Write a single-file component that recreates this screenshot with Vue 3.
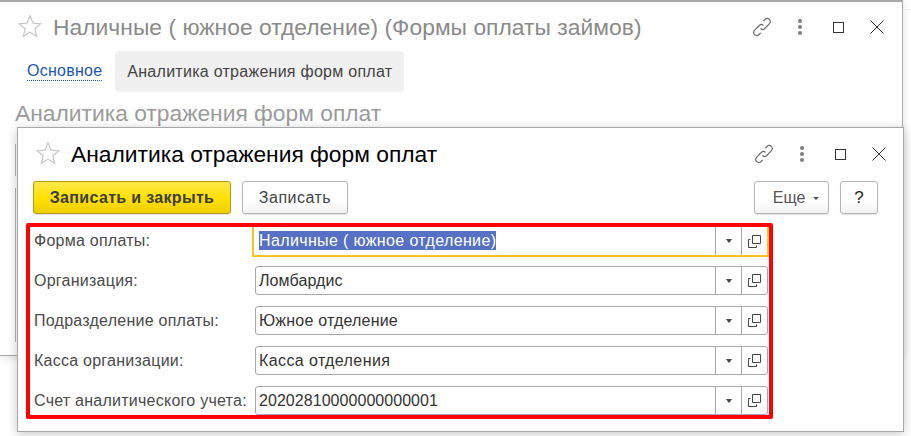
<script setup>
const rows = [
  { label: 'Форма оплаты:', value: 'Наличные ( южное отделение)', focused: true, track: 0.37 },
  { label: 'Организация:', value: 'Ломбардис', track: 0.1 },
  { label: 'Подразделение оплаты:', value: 'Южное отделение', track: 0.2 },
  { label: 'Касса организации:', value: 'Касса отделения', track: 0.4 },
  { label: 'Счет аналитического учета:', value: '20202810000000000001', track: 0.05 }
]
</script>

<template>
  <div class="desk">
    <section class="win back">
      <header class="head back-head">
        <svg class="star" viewBox="0 0 24 24" width="24" height="24"><path d="M12 1.800l3 7.300 7.800.6-6 5.100 1.900 7.600L12 18.300l-6.700 4.100 1.900-7.600-6-5.100 7.800-.6z" /></svg>
        <h1 class="title muted">Наличные ( южное отделение) (Формы оплаты займов)</h1>
        <div class="tools">
          <svg class="link" viewBox="0 0 22 22" width="22" height="22"><path d="M9.500 12.500c1.300 1.300 3 1.200 4.200 0l4.600-4.600c1.400-1.400 1.400-3.300 0-4.500s-3-1.200-4.300.1l-1.700 1.700M12.500 9.500c-1.300-1.300-3-1.200-4.200 0l-4.600 4.600c-1.400 1.400-1.400 3.300 0 4.500s3 1.200 4.300-.1l1.700-1.700" /></svg>
          <span class="dots"><i /><i /><i /></span>
          <span class="max" />
          <svg class="close" viewBox="0 0 14 14" width="14" height="14"><path d="M.5.500l13 13M13.500.500l-13 13" /></svg>
        </div>
      </header>
      <nav class="tabs">
        <a class="tab-link">Основное</a>
        <span class="tab-active">Аналитика отражения форм оплат</span>
      </nav>
      <h2 class="title sub">Аналитика отражения форм оплат</h2>
      <div class="stubs"><span class="stub s1" /><span class="stub s2" /></div>
    </section>

    <span class="edge" />

    <section class="win front">
      <header class="head front-head">
        <svg class="star" viewBox="0 0 24 24" width="24" height="24"><path d="M12 1.800l3 7.300 7.800.6-6 5.100 1.900 7.600L12 18.300l-6.700 4.100 1.900-7.600-6-5.100 7.800-.6z" /></svg>
        <h1 class="title dark">Аналитика отражения форм оплат</h1>
        <div class="tools">
          <svg class="link" viewBox="0 0 22 22" width="22" height="22"><path d="M9.500 12.500c1.300 1.300 3 1.200 4.200 0l4.600-4.600c1.400-1.400 1.400-3.300 0-4.500s-3-1.200-4.300.1l-1.700 1.700M12.500 9.500c-1.300-1.300-3-1.200-4.200 0l-4.600 4.600c-1.400 1.400-1.400 3.300 0 4.500s3 1.200 4.300-.1l1.700-1.700" /></svg>
          <span class="dots"><i /><i /><i /></span>
          <span class="max" />
          <svg class="close" viewBox="0 0 14 14" width="14" height="14"><path d="M.5.500l13 13M13.500.500l-13 13" /></svg>
        </div>
      </header>

      <div class="toolbar">
        <button class="btn primary">Записать и закрыть</button>
        <button class="btn save">Записать</button>
        <span class="spacer" />
        <button class="btn more">Еще<span class="caret" /></button>
        <button class="btn help">?</button>
      </div>

      <div class="form">
        <div v-for="row in rows" :key="row.label" class="row">
          <label class="label">{{ row.label }}</label>
          <div class="input" :class="{ focused: row.focused }">
            <span class="value" :style="{ letterSpacing: row.track + 'px' }"><span :class="{ selected: row.focused }">{{ row.value }}</span></span>
            <span class="cell"><span class="arrow" /></span>
            <span class="cell">
              <svg viewBox="0 0 13 13" width="13" height="13"><path class="copy" d="M4.500.5h8v8h-8zM2.500 4.500h-2v8h8v-2" /></svg>
            </span>
          </div>
        </div>
        <span class="mark" />
      </div>
    </section>
  </div>
</template>

<style>
html, body { margin: 0; background: #fff; }
</style>

<style scoped>
.desk {
  position: relative;
  width: 911px;
  height: 436px;
  overflow: hidden;
  background: #fff;
  font-family: "Liberation Sans", Arial, sans-serif;
}
.win { position: absolute; box-sizing: border-box; background: #fff; }
.back {
  left: 0; top: 0; width: 903px; height: 356px;
  border-top: 2px solid #a8a8a8;
  border-right: 1px solid #a8a8a8;
  border-bottom: 1px solid #a8a8a8;
  box-shadow: 0 2px 8px rgba(0,0,0,.12);
}
.edge { position: absolute; left: 904px; top: 9px; width: 7px; height: 1px; background: #ececec; }
.front {
  left: 17px; top: 127px; width: 887px; height: 305px;
  border: 1px solid #a8a8a8;
  box-shadow: 0 2px 10px rgba(0,0,0,.22);
  display: flex; flex-direction: column;
}
.head { display: flex; align-items: center; }
.back-head { height: 50px; padding-left: 18px; padding-right: 18px; }
.front-head { height: 52px; padding-left: 18px; padding-right: 17px; }
.star { flex: none; margin-bottom: 2px; }
.star path { fill: #fff; stroke: #c4c8cd; stroke-width: 1.200; }
.title { margin: 0; font-weight: 400; font-size: 22.800px; line-height: 28px; white-space: nowrap; }
.head .title { margin-left: 11px; }
.muted { color: #8a8a8a; letter-spacing: .04px; }
.dark { color: #000; }
.tools { margin-left: auto; display: flex; align-items: center; }
.link path { fill: none; stroke: #6b6b6b; stroke-width: 1.200; }
.dots { display: flex; flex-direction: column; gap: 2px; margin-left: 25px; width: 4px; }
.dots i { display: block; width: 4px; height: 4px; border-radius: 50%; background: #7d7d7d; }
.max { box-sizing: border-box; width: 11px; height: 11px; border: 1px solid #333; margin-left: 31px; }
.close { margin-left: 26px; }
.close path { fill: none; stroke: #333; stroke-width: 1; }
.tabs { display: flex; align-items: center; height: 41px; padding-left: 27px; margin-top: -1px; }
.tab-link { color: #1a56b8; font-size: 16px; letter-spacing: .25px; border-bottom: 1px dotted #1a56b8; line-height: 18px; }
.tab-active {
  margin-left: 13px; padding: 0 12px; height: 41px; line-height: 41px;
  background: #f0f0f0; border-radius: 4px; color: #444; font-size: 16px; letter-spacing: .27px;
}
.sub { color: #9b9b9b; margin-left: 15px; margin-top: 7px; }
.stubs { position: absolute; left: 15px; top: 142px; }
.stub { position: absolute; left: 0; width: 2px; box-sizing: border-box; border-left: 1px solid #b5b5b5; }
.s1 { top: 0; height: 32px; }
.s2 { top: 44px; height: 154px; }
.toolbar { display: flex; align-items: stretch; height: 33px; padding: 0 25px 0 15px; margin-top: 1px; gap: 11px; }
.spacer { flex: 1; }
.btn {
  box-sizing: border-box; height: 33px; padding: 0;
  font-family: inherit; font-size: 16px; color: #444;
  border: 1px solid #b5b5b5; border-radius: 3px;
  background: linear-gradient(#fff 60%, #f2f2f2);
  box-shadow: 0 1px 1px rgba(0,0,0,.12);
}
.primary {
  width: 198px; font-weight: 700; color: #3c3c3c; letter-spacing: .33px;
  border-color: #b49b10;
  background: linear-gradient(#ffe94a, #ffe000 55%, #efce00);
}
.save { width: 106px; letter-spacing: .5px; }
.more { width: 75px; padding-left: 9px; color: #555; }
.help { width: 38px; color: #222; font-size: 17px; }
.caret {
  display: inline-block; vertical-align: middle; margin-left: 8px;
  border: 3px solid transparent; border-top: 3px solid #555; border-bottom: 0;
}
.form { position: relative; display: flex; flex-direction: column; gap: 11px; padding: 0 0 0 16px; margin-top: 12px; }
.row { display: flex; align-items: flex-start; height: 29px; }
.label { width: 221px; flex: none; color: #4a4a4a; font-size: 16px; line-height: 29px; letter-spacing: .25px; white-space: nowrap; }
.input {
  box-sizing: border-box; width: 513px; height: 29px; flex: none;
  display: flex; align-items: stretch;
  border: 1px solid #a8a8a8; border-radius: 3px;
  font-size: 16px; color: #333;
}
.input.focused {
  width: 517px; height: 31px; margin-left: -3px;
  border: 2px solid #fbc61c; border-top: 1px solid transparent; border-radius: 0;
}
.value { flex: 1; padding-left: 3px; line-height: 27px; white-space: nowrap; }
.focused .value { padding-left: 5px; }
.selected { background: #5570c4; color: #fff; padding: 1px 0; }
.cell {
  flex: none; width: 26px; box-sizing: border-box;
  border-left: 1px solid #a8a8a8;
  display: flex; align-items: center; justify-content: center;
}
.arrow { border: 3.500px solid transparent; border-top: 4px solid #444; border-bottom: 0; }
.copy { fill: none; stroke: #444; stroke-width: 1; }
.mark {
  position: absolute; left: 8px; top: -3px; width: 747px; height: 196px;
  box-sizing: border-box; border: 4px solid #ff0000; border-radius: 2px;
  pointer-events: none;
}
</style>
